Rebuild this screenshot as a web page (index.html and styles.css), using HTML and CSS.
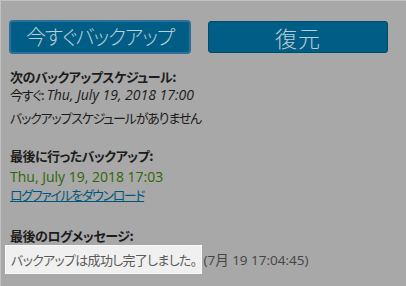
FILE: index.html
```html
<!DOCTYPE html>
<html lang="ja">
<head>
<meta charset="utf-8">
<link rel="stylesheet" href="styles.css">
</head>
<body>
<div class="page">
  <div class="buttons">
    <button class="btn btn-focus"><span class="btn-label wide">今すぐバックアップ</span></button>
    <button class="btn"><span class="btn-label big">復元</span></button>
  </div>
  <div class="section first">
    <div class="head">次のバックアップスケジュール:</div>
    <div class="line"><span class="ja">今すぐ:</span> <em class="latin date">Thu, July 19, 2018 17:00</em></div>
    <div class="line gap"><span class="ja">バックアップスケジュールがありません</span></div>
  </div>
  <div class="section second">
    <div class="head">最後に行ったバックアップ:</div>
    <div class="line green"><span class="latin">Thu, July 19, 2018 17:03</span></div>
    <div class="line"><a class="link ja" href="#">ログファイルをダウンロード</a></div>
  </div>
  <div class="section third">
    <div class="head">最後のログメッセージ:</div>
    <div class="logrow"><span class="logbox">バックアップは成功し完了しました。</span><span class="logtime">(7月 19 17:04:45)</span></div>
  </div>
</div>
</body>
</html>
```
FILE: styles.css
```css
html, body {
  margin: 0;
  padding: 0;
  background: #a8a8a8;
}
.page {
  width: 405px;
  height: 285px;
  border-top: 1px solid #c2c2c2;
  border-left: 1px solid #c2c2c2;
  font-family: "Open Sans", "Noto Sans CJK JP", sans-serif;
  font-size: 13px;
  line-height: 18px;
  color: #1c1c1c;
  overflow: hidden;
}
.buttons {
  display: flex;
  gap: 18px;
  padding: 20px 0 0 9px;
}
.btn {
  width: 180px;
  height: 32px;
  margin: 0;
  padding: 0;
  border: 1px solid #004a6a;
  border-radius: 3px;
  background: #005e86;
  color: #bfcdd4;
  font-family: "Noto Sans CJK JP", sans-serif;
  font-size: 20px;
  font-weight: 300;
  font-feature-settings: "palt";
  line-height: 30px;
}
.btn-label.wide {
  letter-spacing: -1.2px;
}
.btn-label.big {
  font-size: 22px;
  letter-spacing: 1px;
}
.btn-focus {
  border-color: #2a72a0;
  box-shadow: 0 0 0 1px #2d6f98;
}
.section {
  padding-left: 9px;
}
.first { margin-top: 15px; }
.second { margin-top: 20px; }
.third { margin-top: 23px; }
.head {
  font-weight: bold;
  font-family: "Noto Sans CJK JP", sans-serif;
  font-feature-settings: "palt";
  letter-spacing: -0.5px;
}
.ja {
  font-family: "Noto Sans CJK JP", sans-serif;
  font-feature-settings: "palt";
  letter-spacing: -1.2px;
}
.latin {
  font-family: "Open Sans", sans-serif;
  font-size: 14px;
}
.line.gap { margin-top: 5px; }
.date {
  font-style: italic;
}
.green {
  color: #2f6504;
  margin-top: 3px;
}
.link {
  color: #00577d;
  text-decoration: underline;
  letter-spacing: -1.4px;
}
.logrow {
  display: flex;
  align-items: center;
  margin-left: -5px;
  margin-top: 0;
}
.logbox {
  display: inline-block;
  background: #f0f0f0;
  border: 1px solid #f8f8f8;
  padding: 5px 5px 4px 5px;
  color: #5a5a5a;
  font-family: "Noto Sans CJK JP", sans-serif;
  font-feature-settings: "palt";
  letter-spacing: -0.7px;
}
.logtime {
  color: #444;
  padding-left: 1px;
  font-family: "Open Sans", "Noto Sans CJK JP", sans-serif;
  font-size: 13.5px;
}
```
